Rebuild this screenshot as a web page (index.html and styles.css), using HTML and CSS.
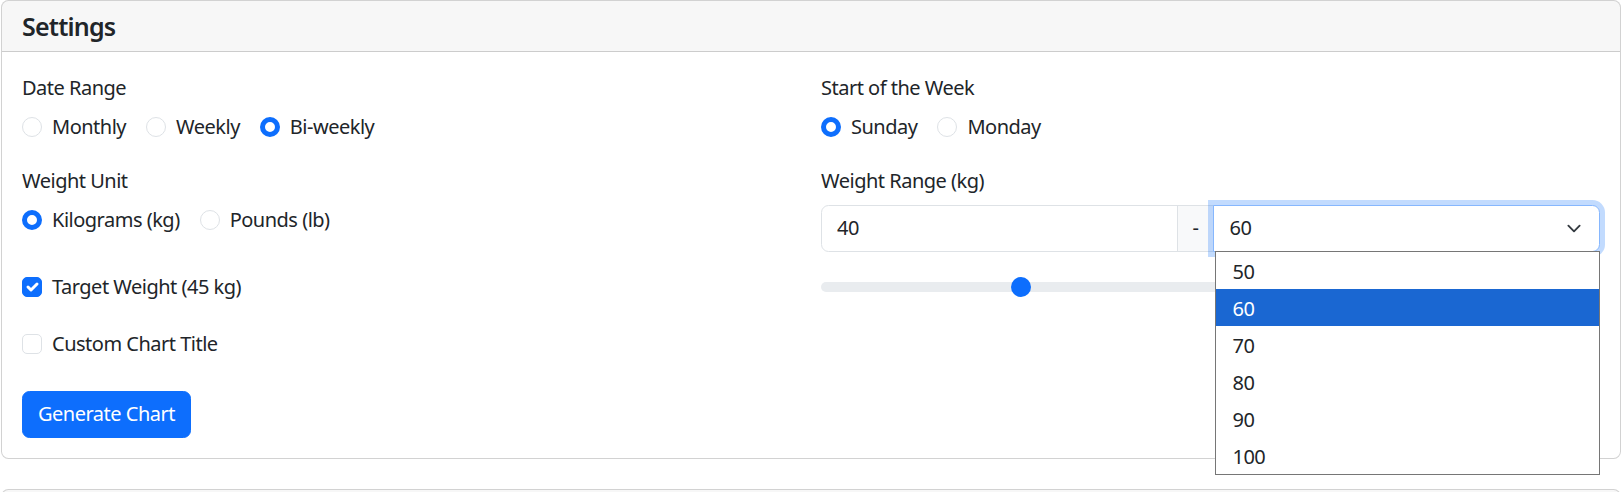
FILE: index.html
```html
<!DOCTYPE html>
<html lang="en">
<head>
<meta charset="utf-8">
<title>Settings</title>
<link rel="stylesheet" href="styles.css">
</head>
<body>
<div class="page">
  <section class="card">
    <header class="card-header"><h5 class="card-title">Settings</h5></header>
    <div class="card-body">
      <div class="row">
        <div class="col">
          <div class="group">
            <div class="form-label">Date Range</div>
            <div class="options">
              <label class="check"><span class="radio"></span>Monthly</label>
              <label class="check"><span class="radio"></span>Weekly</label>
              <label class="check"><span class="radio is-checked"></span>Bi-weekly</label>
            </div>
          </div>
          <div class="group group-unit">
            <div class="form-label">Weight Unit</div>
            <div class="options">
              <label class="check"><span class="radio is-checked"></span>Kilograms (kg)</label>
              <label class="check"><span class="radio"></span>Pounds (lb)</label>
            </div>
          </div>
          <label class="check opt-target"><span class="box is-checked"><svg viewBox="0 0 20 20" width="20" height="20"><path d="m6 10 3 3 6-6" fill="none" stroke="#fff" stroke-width="3" stroke-linecap="round" stroke-linejoin="round"/></svg></span>Target Weight (45 kg)</label>
          <label class="check opt-custom"><span class="box"></span>Custom Chart Title</label>
          <div><button class="btn" type="button">Generate Chart</button></div>
        </div>
        <div class="col">
          <div class="group">
            <div class="form-label">Start of the Week</div>
            <div class="options">
              <label class="check"><span class="radio is-checked"></span>Sunday</label>
              <label class="check"><span class="radio"></span>Monday</label>
            </div>
          </div>
          <div class="form-label">Weight Range (kg)</div>
          <div class="input-group">
            <input class="form-control" type="text" value="40">
            <span class="input-group-text">-</span>
            <div class="form-select">
              <span>60</span>
              <svg class="chevron" viewBox="0 0 16 16" width="20" height="20"><path d="m2 5 6 6 6-6" fill="none" stroke="#343a40" stroke-width="2" stroke-linecap="round" stroke-linejoin="round"/></svg>
              <ul class="listbox">
                <li class="option">50</li>
                <li class="option is-active">60</li>
                <li class="option">70</li>
                <li class="option">80</li>
                <li class="option">90</li>
                <li class="option">100</li>
              </ul>
            </div>
          </div>
          <input class="form-range" type="range" min="40" max="60" value="45">
        </div>
      </div>
    </div>
  </section>
  <section class="card card-next">
    <header class="card-header"><h5 class="card-title">&nbsp;</h5></header>
  </section>
</div>
</body>
</html>
```

FILE: styles.css
```css
html {
  font-size: 20px;
}

body {
  margin: 0;
  font-family: "Noto Sans", "Open Sans", sans-serif;
  font-size: 20px;
  line-height: 1.5;
  letter-spacing: -0.5px;
  color: #212529;
  background: #fff;
}

.page {
  padding-left: 1px;
  overflow: hidden;
  height: 492px;
}

.card {
  border: 1px solid rgba(0, 0, 0, 0.175);
  border-radius: 7.5px;
  background: #fff;
}

.card-next {
  margin-top: 30px;
}

.card-header {
  background: rgba(0, 0, 0, 0.03);
  border-bottom: 1px solid rgba(0, 0, 0, 0.175);
  padding: 10px 20px;
  border-radius: 6.5px 6.5px 0 0;
}

.card-title {
  margin: 0;
  font-size: 25px;
  font-weight: 600;
  line-height: 30px;
  letter-spacing: -0.8px;
}

.card-body {
  padding: 20px;
}

.row {
  display: grid;
  grid-template-columns: 1fr 1fr;
  column-gap: 20px;
}

.col {
  display: flex;
  flex-direction: column;
  align-items: stretch;
  min-width: 0;
}

.form-label {
  display: block;
  margin-bottom: 10px;
  padding-top: 1px;
  line-height: 29px;
}

.group {
  margin-bottom: 22.5px;
}

.group-unit {
  margin-bottom: 37px;
}

.options {
  display: flex;
}

.check {
  display: flex;
  align-items: center;
  gap: 10px;
  min-height: 30px;
  margin-right: 20px;
  line-height: 30px;
  cursor: pointer;
}

.radio,
.box {
  box-sizing: border-box;
  flex: none;
  width: 20px;
  height: 20px;
  border: 1px solid #dee2e6;
  background: #fff;
  display: flex;
  align-items: center;
  justify-content: center;
}

.radio {
  border-radius: 50%;
}

.radio.is-checked {
  border: 5px solid #0d6efd;
}

.box {
  border-radius: 5px;
}

.box.is-checked {
  background: #0d6efd;
  border-color: #0d6efd;
}

.box svg {
  flex: none;
}

.opt-target {
  margin-bottom: 27px;
  align-self: flex-start;
}

.opt-custom {
  margin-bottom: 32px;
  align-self: flex-start;
}

.btn {
  font-family: inherit;
  font-size: 20px;
  line-height: 30px;
  letter-spacing: -0.5px;
  padding: 7.5px 15px;
  border: 1px solid #0d6efd;
  background: #0d6efd;
  color: #fff;
  border-radius: 7.5px;
  cursor: pointer;
}

.input-group {
  display: flex;
  align-items: stretch;
  height: 47px;
}

.form-control {
  box-sizing: border-box;
  flex: 1 1 32px;
  width: auto;
  min-width: 0;
  margin: 0;
  padding: 7.5px 15px;
  font-family: inherit;
  font-size: 20px;
  line-height: 30px;
  letter-spacing: -0.5px;
  color: #212529;
  border: 1px solid #dee2e6;
  border-radius: 7.5px 0 0 7.5px;
  outline: none;
}

.input-group-text {
  display: flex;
  align-items: center;
  padding: 7.5px 15px;
  margin-left: -1px;
  background: #f8f9fa;
  border: 1px solid #dee2e6;
}

.form-select {
  box-sizing: border-box;
  position: relative;
  z-index: 3;
  flex: 1 1 62px;
  min-width: 0;
  margin-left: -1px;
  display: flex;
  align-items: center;
  justify-content: space-between;
  padding: 7.5px 15px;
  border: 1px solid #86b7fe;
  border-radius: 0 7.5px 7.5px 0;
  box-shadow: 0 0 0 5px rgba(13, 110, 253, 0.25);
  background: #fff;
}

.chevron {
  flex: none;
  width: 20px;
  height: 15px;
}

.listbox {
  position: absolute;
  top: 100%;
  left: 1px;
  right: -1px;
  margin: 0;
  padding: 0;
  list-style: none;
  background: #fff;
  border: 1px solid #767676;
  z-index: 10;
}

.option {
  box-sizing: border-box;
  height: 37px;
  padding-top: 2px;
  line-height: 35px;
  padding-left: 16px;
  font-size: 20px;
  color: #212529;
}

.option.is-active {
  background: #1a67d2;
  color: #fff;
}

.form-range {
  -webkit-appearance: none;
  appearance: none;
  display: block;
  width: 100%;
  height: 30px;
  margin: 20px 0 0;
  padding: 0;
  background: transparent;
}

.form-range::-webkit-slider-runnable-track {
  height: 10px;
  background: #e9ecef;
  border-radius: 10px;
}

.form-range::-webkit-slider-thumb {
  -webkit-appearance: none;
  appearance: none;
  width: 20px;
  height: 20px;
  margin-top: -5px;
  border: 0;
  border-radius: 50%;
  background: #0d6efd;
}
```
